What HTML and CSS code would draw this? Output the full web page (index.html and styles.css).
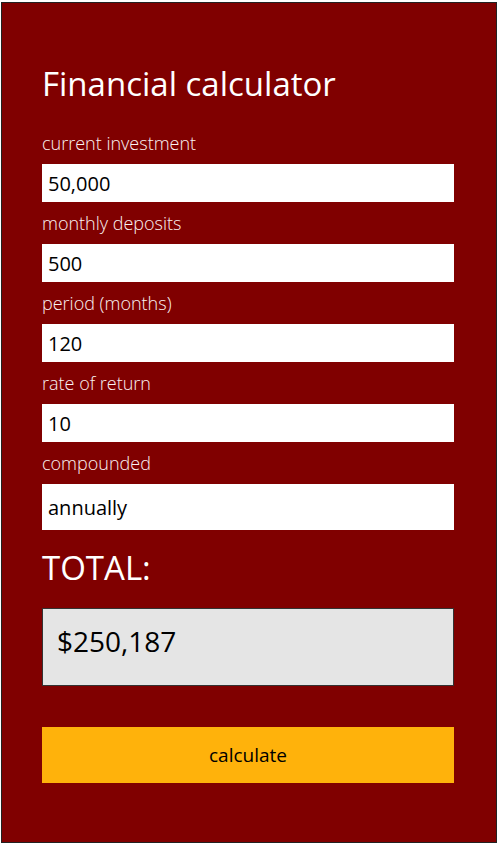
FILE: index.html
```html
<!DOCTYPE html>
<html lang="en">
<head>
<meta charset="utf-8">
<title>Financial calculator</title>
<link rel="stylesheet" href="styles.css">
</head>
<body>
<div class="panel">
  <h1 class="title">Financial calculator</h1>
  <div class="field">
    <label class="label" for="inv">current investment</label>
    <input class="input" id="inv" type="text" value="50,000">
  </div>
  <div class="field">
    <label class="label" for="dep">monthly deposits</label>
    <input class="input" id="dep" type="text" value="500">
  </div>
  <div class="field">
    <label class="label" for="per">period (months)</label>
    <input class="input" id="per" type="text" value="120">
  </div>
  <div class="field">
    <label class="label" for="rate">rate of return</label>
    <input class="input" id="rate" type="text" value="10">
  </div>
  <div class="field">
    <label class="label" for="comp">compounded</label>
    <select class="input select" id="comp">
      <option>annually</option>
      <option>monthly</option>
    </select>
  </div>
  <h2 class="total">TOTAL:</h2>
  <div class="result">$250,187</div>
  <button class="btn" type="button">calculate</button>
</div>
</body>
</html>
```
FILE: styles.css
```css
* { box-sizing: border-box; }
html, body { margin: 0; padding: 0; background: #fff; }
body { font-family: "Open Sans", "Noto Sans", sans-serif; }
.panel {
  margin: 2px 3px 0 1px;
  width: 496px;
  height: 841px;
  border: 1px solid #222;
  background: #800000;
  padding: 59px 41px 0 40px;
}
.title {
  margin: 0 0 16px;
  font-size: 33px;
  line-height: 44px;
  font-weight: 400;
  color: #fff;
}
.field { display: flex; flex-direction: column; }
.label {
  height: 42px;
  line-height: 42px;
  font-size: 18px;
  font-weight: 300;
  color: #fbf2f2;
}
.input {
  width: 412px;
  height: 38px;
  border: 0;
  outline: 0;
  margin: 0;
  padding: 0 6px;
  background: #fff;
  color: #000;
  font-family: "Open Sans", "Noto Sans", sans-serif;
  font-size: 20px;
  border-radius: 0;
}
.select {
  height: 46px;
  appearance: none;
  -webkit-appearance: none;
}
.total {
  margin: 16px 0 18px;
  font-size: 33px;
  line-height: 44px;
  font-weight: 400;
  color: #fff;
}
.result {
  width: 412px;
  height: 78px;
  border: 1px solid #333;
  background: #e5e5e5;
  padding: 13px 14px;
  font-size: 28px;
  color: #000;
}
.btn {
  display: block;
  margin-top: 41px;
  width: 412px;
  height: 56px;
  border: 0;
  background: #ffb20b;
  color: #000;
  font-family: "Open Sans", "Noto Sans", sans-serif;
  font-size: 19px;
  padding: 0;
}
```
